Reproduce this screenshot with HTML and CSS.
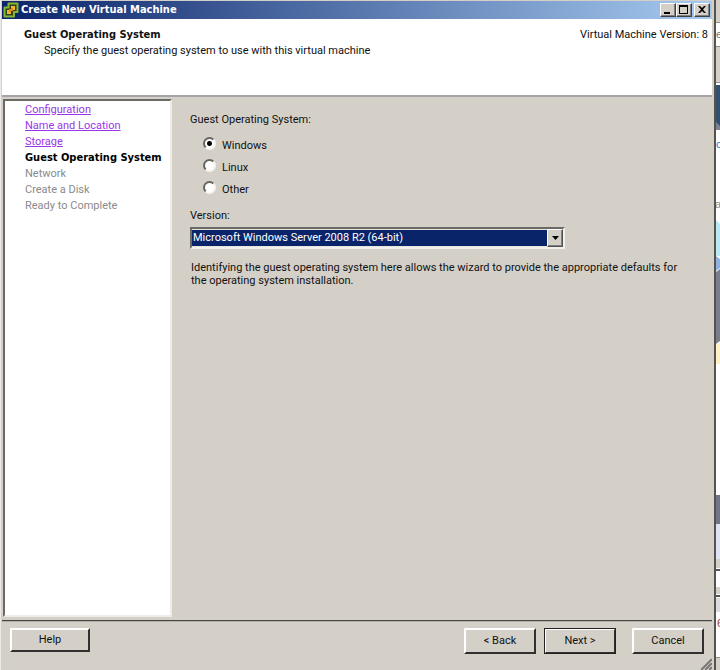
FILE: index.html
```
<!DOCTYPE html>
<html lang="en">
<head>
<meta charset="utf-8">
<title>Create New Virtual Machine</title>
<link rel="stylesheet" href="styles.css">
</head>
<body>
<div class="desktop">
  <main class="window">
    <header class="titlebar">
      <svg class="app-icon" viewBox="0 0 16 16" aria-hidden="true">
        <path d="M5.500 1.500h9v8.500h-3.500v4.500h-9.500v-9h4z" fill="#30451c" stroke="#86b536" stroke-width="2" stroke-linejoin="round"/>
        <path d="M8 4h4v4h-2V6H8zM4 8h2v2h2v2H4z" fill="#f3b634"/>
        <path d="M6 7h2v-1h2v3H8v1H6z" fill="#e8851c"/>
      </svg>
      <h1 class="title">Create New Virtual Machine</h1>
      <div class="caption-buttons">
        <button class="caption" type="button" aria-label="Minimize"><svg viewBox="0 0 12 10"><path d="M2 7h6v2H2z"/></svg></button>
        <button class="caption" type="button" aria-label="Maximize"><svg viewBox="0 0 12 10"><path d="M1 0h9v9H1zM2 2v6h7V2z" fill-rule="evenodd"/></svg></button>
        <button class="caption caption-close" type="button" aria-label="Close"><svg viewBox="0 0 12 10"><path d="M2 1h2l2 2 2-2h2L7 4.500 10 8H8L6 6 4 8H2l3-3.500z"/></svg></button>
      </div>
    </header>

    <section class="banner">
      <div>
        <h2 class="banner-title">Guest Operating System</h2>
        <p class="banner-text">Specify the guest operating system to use with this virtual machine</p>
      </div>
      <p class="version">Virtual Machine Version: 8</p>
    </section>

    <div class="content">
      <nav class="steps">
        <a class="step" href="#configuration">Configuration</a>
        <a class="step" href="#name">Name and Location</a>
        <a class="step" href="#storage">Storage</a>
        <strong class="step current">Guest Operating System</strong>
        <span class="step pending">Network</span>
        <span class="step pending">Create a Disk</span>
        <span class="step pending">Ready to Complete</span>
      </nav>
      <form class="form">
        <fieldset class="systems">
          <legend>Guest Operating System:</legend>
          <label class="option"><input type="radio" name="os" checked><span>Windows</span></label>
          <label class="option"><input type="radio" name="os"><span>Linux</span></label>
          <label class="option"><input type="radio" name="os"><span>Other</span></label>
        </fieldset>
        <label class="version-label" for="version">Version:</label>
        <div class="combo">
          <select id="version">
            <option>Microsoft Windows Server 2008 R2 (64-bit)</option>
          </select>
          <span class="combo-arrow"><svg viewBox="0 0 7 4"><path d="M0 0h7L3.500 4z"/></svg></span>
        </div>
        <p class="hint">Identifying the guest operating system here allows the wizard to provide the appropriate defaults for the operating system installation.</p>
      </form>
    </div>

    <footer class="footer">
      <button class="button help" type="button">Help</button>
      <button class="button" type="button">&lt; Back</button>
      <button class="button default" type="button">Next &gt;</button>
      <button class="button" type="button">Cancel</button>
      <svg class="grip" viewBox="0 0 14 14" aria-hidden="true">
        <path d="M2 14 14 2M6 14 14 6M10 14l4-4" stroke="#fff" fill="none"/>
        <path d="M3 14 14 3M7 14l7-7M11 14l3-3" stroke="#77756f" stroke-width="2" fill="none"/>
      </svg>
    </footer>
  </main>
  <svg class="backdrop" viewBox="0 0 4 670" preserveAspectRatio="none" aria-hidden="true">
    <path fill="#fff" d="M0 0h4v670H0z"/>
    <path fill="#d4d0c8" d="M0 0h4v22H0zM0 47h4v35H0zM0 559h4v9H0zM0 587h4v7H0zM0 658h4v12H0z"/>
    <path fill="#8f8d88" d="M0 22h4v1H0zM0 46h4v1H0zM0 82h4v1H0zM0 657h4v1H0z"/>
    <path fill="#34506f" d="M0 85h4v45H0z"/>
    <path fill="#7c8393" d="M0 122l4 4v4H0z"/>
    <path fill="#b9eaf4" d="M0 220l4 4v32H0z"/>
    <path fill="#8fb2df" d="M0 256l4 3v9l-4 3z"/>
    <path fill="#7b7d8b" d="M0 272l4-3v72l-4 3z"/>
    <path fill="#fff0c5" d="M0 345l4-2v21H0z"/>
    <path fill="#6e7688" d="M0 495h4v29H0z"/>
    <path fill="#dde5f5" d="M0 524h4v35H0z"/>
    <path fill="#55534f" d="M0 569h4v2H0zM0 595h4v2H0z"/>
    <path fill="#dcdcdf" d="M0 598h4v14H0z"/>
    <g font-family="Liberation Sans" font-size="11">
      <text x="0" y="38" fill="#777">e</text>
      <text x="0" y="148" fill="#1682e0">c</text>
      <text x="-1" y="208" fill="#888">a</text>
      <text x="1" y="627" fill="#9a4430">6</text>
    </g>
  </svg>
</div>
</body>
</html>
```
FILE: styles.css
```
* { box-sizing: border-box; }

body {
  margin: 0;
  background: #d4d0c8;
  color: #111;
  font: 11px/16px Roboto, sans-serif;
}

h1, h2, p, fieldset, legend { margin: 0; padding: 0; border: 0; font-size: inherit; }

button, select { font: inherit; color: inherit; border-radius: 0; }

.desktop {
  display: grid;
  grid-template-columns: 1fr 4px;
  min-height: 100vh;
}

.backdrop { width: 4px; height: 100%; overflow: hidden; }

.window {
  display: flex;
  flex-direction: column;
  padding: 1px 2px 0;
  border-right: 2px solid #55534f;
  box-shadow: inset 1px 0 #eceae6;
}

.titlebar {
  display: flex;
  align-items: center;
  height: 18px;
  padding: 0 2px 0 1px;
  background: linear-gradient(to right, #0a246a, #a6caf0);
  color: #fff;
}

.app-icon { width: 16px; height: 16px; }

.title, .banner-title, .current {
  font-family: "DejaVu Sans Condensed", "DejaVu Sans", sans-serif;
  font-weight: bold;
}

.title { flex: 1; margin-left: 2px; }

.caption-buttons { display: flex; }

.caption {
  display: flex;
  align-items: center;
  justify-content: center;
  width: 16px;
  height: 14px;
  padding: 0;
  border: 1px solid;
  border-color: #fff #404040 #404040 #fff;
  background: #d4d0c8;
  box-shadow: inset -1px -1px #808080;
}

.caption svg { width: 12px; height: 10px; }

.caption-close { margin-left: 2px; }

.banner {
  display: flex;
  justify-content: space-between;
  height: 78px;
  padding: 8px 4px 0 22px;
  background: #fff;
  border-bottom: 2px solid #a5a3a8;
}

.banner-text { padding-left: 20px; }

.content { display: flex; flex: 1; padding-top: 2px; }

.steps {
  display: flex;
  flex-direction: column;
  width: 169px;
  padding: 1px 0 0 20px;
  margin-left: 1px;
  background: #fff;
  border: 2px solid;
  border-color: #6c6a66 #eeece8 #eeece8 #6c6a66;
}

.step { color: #9a35e8; white-space: nowrap; }
.current { color: #000; }
.pending { color: #8a8a8a; }

.form { flex: 1; padding: 13px 24px 0 18px; }

.systems { padding-bottom: 8px; }
.systems legend { padding-bottom: 6px; }

.option {
  display: flex;
  gap: 6px;
  height: 22px;
  padding-left: 13px;
}

.option span { padding-top: 4px; }

.option input {
  appearance: none;
  width: 13px;
  height: 13px;
  margin: 3px 0 0;
  border: 2px solid;
  border-color: #66645f #f5f4f0 #f5f4f0 #66645f;
  border-radius: 50%;
  background: #fff;
}

.option input:checked { background: radial-gradient(circle, #000 2px, #fff 3px); }

.version-label { display: block; }

.combo {
  position: relative;
  width: 375px;
  max-width: 100%;
  margin-top: 3px;
}

.combo select {
  display: block;
  appearance: none;
  width: 100%;
  height: 22px;
  padding: 0 17px 0 1px;
  border: 2px solid;
  border-color: #6c6a66 #f2f0ec #f2f0ec #6c6a66;
  background: #0a246a;
  color: #fff;
  box-shadow: inset 0 1px #e6e4df, inset 0 -1px #e6e4df;
}

.combo-arrow {
  position: absolute;
  top: 2px;
  right: 2px;
  bottom: 2px;
  display: flex;
  align-items: center;
  justify-content: center;
  width: 16px;
  border: 1px solid;
  border-color: #fff #505050 #505050 #fff;
  background: #d4d0c8;
  box-shadow: inset -1px -1px #808080;
  pointer-events: none;
}

.combo-arrow svg { width: 7px; height: 4px; }

.hint { margin: 12px 0 0 1px; line-height: 13px; }

.footer {
  position: relative;
  display: flex;
  gap: 8px;
  height: 50px;
  margin-top: 3px;
  padding: 7px 8px 0;
  border-top: 1px solid #45443f;
  box-shadow: inset 0 1px #b5b2ab;
}

.button {
  width: 72px;
  height: 26px;
  padding: 0;
  border: 2px solid;
  border-color: #fff #303030 #303030 #fff;
  background: #d4d0c8;
}

.help { width: 80px; height: 24px; margin-right: auto; }

.default { outline: 1px solid #222; outline-offset: -1px; margin-right: 8px; }

.grip { position: absolute; right: 0; bottom: 0; width: 14px; height: 14px; }
```
